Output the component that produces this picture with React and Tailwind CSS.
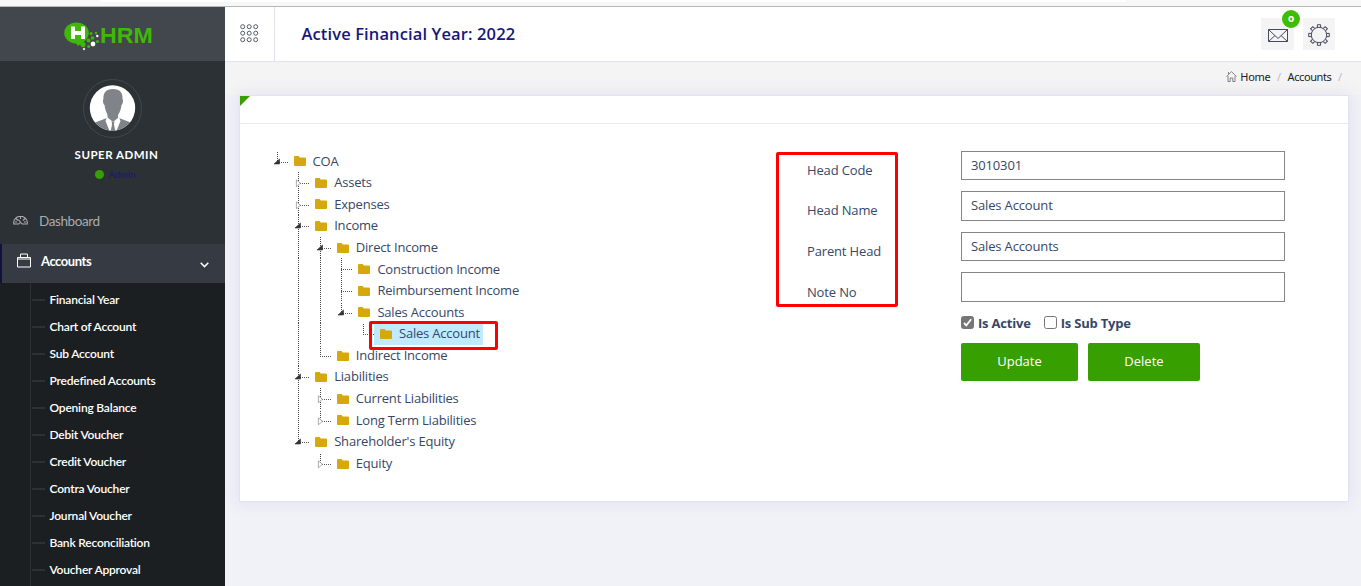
import React from "react";

const NAV = [
  "Financial Year",
  "Chart of Account",
  "Sub Account",
  "Predefined Accounts",
  "Opening Balance",
  "Debit Voucher",
  "Credit Voucher",
  "Contra Voucher",
  "Journal Voucher",
  "Bank Reconciliation",
  "Voucher Approval",
];

// guides: ancestor columns that carry a vertical line through the row
// state: open | closed | leaf; last: the branch ends on this row
const TREE = [
  { label: "COA", level: 0, guides: [], state: "open", last: true },
  { label: "Assets", level: 1, guides: [], state: "closed" },
  { label: "Expenses", level: 1, guides: [], state: "closed" },
  { label: "Income", level: 1, guides: [], state: "open" },
  { label: "Direct Income", level: 2, guides: [1], state: "open" },
  { label: "Construction Income", level: 3, guides: [1, 2], state: "leaf" },
  { label: "Reimbursement Income", level: 3, guides: [1, 2], state: "leaf" },
  { label: "Sales Accounts", level: 3, guides: [1, 2], state: "open", last: true },
  { label: "Sales Account", level: 4, guides: [1, 2], state: "leaf", last: true, selected: true },
  { label: "Indirect Income", level: 2, guides: [1], state: "leaf", last: true },
  { label: "Liabilities", level: 1, guides: [], state: "open" },
  { label: "Current Liabilities", level: 2, guides: [1], state: "closed" },
  { label: "Long Term Liabilities", level: 2, guides: [1], state: "closed", last: true },
  { label: "Shareholder's Equity", level: 1, guides: [], state: "open", last: true },
  { label: "Equity", level: 2, guides: [], state: "closed", last: true },
];

function Connector({ state, last }) {
  return (
    <svg className="h-[21.6px] w-6 shrink-0" viewBox="0 0 24 21.6">
      <path d={last ? "M7.2 1V11" : "M7.2 0V21.6"} stroke="#444" strokeDasharray="1 1" shapeRendering="crispEdges" />
      <path d="M7 11.5H19" stroke="#555" strokeDasharray="1 1" shapeRendering="crispEdges" />
      {state === "open" && <path d="M9.5 8v5H4z" fill="#333" stroke="#333" strokeWidth=".6" />}
      {state === "closed" && <path d="M5.4 7.8L9.4 11.3L5.4 14.8z" fill="#fff" stroke="#999" strokeWidth=".8" />}
    </svg>
  );
}

function Guide({ on }) {
  return (
    <svg className="h-[21.6px] w-[21.6px] shrink-0" viewBox="0 0 21.6 21.6">
      {on && <path d="M7.2 0V21.6" stroke="#444" strokeDasharray="1 1" shapeRendering="crispEdges" />}
    </svg>
  );
}

function TreeRow({ node }) {
  return (
    <div className="relative flex h-[21.6px] items-center">
      {Array.from({ length: node.level }, (_, i) => (
        <Guide key={i} on={node.guides.includes(i)} />
      ))}
      <Connector state={node.state} last={node.last} />
      <div className={node.selected ? "-ml-1.5 flex h-[21px] items-center bg-[#beebff] pr-[3px] pl-1.5" : "flex items-center"}>
        <svg className="mr-[7px] h-[10px] w-3" viewBox="0 0 12 10">
          <path d="M1 0H4.3Q5 0 5.3.8L5.6 1.5H11Q12 1.5 12 2.5V9Q12 10 11 10H1Q0 10 0 9V1Q0 0 1 0z" fill="#d5a90e" />
        </svg>
        <span className="whitespace-nowrap tracking-[-0.2px]">{node.label}</span>
      </div>
      {node.selected && (
        <div className="absolute top-[-2.3px] left-[99.4px] h-[29px] w-[129px] rounded-[2px] border-3 border-[#fe0000]" />
      )}
    </div>
  );
}

function Logo() {
  return (
    <div className="flex h-8 items-center">
      <svg className="h-8 w-9 shrink-0" viewBox="0 0 36 32">
        <ellipse cx="12.5" cy="12" rx="12.3" ry="10.5" fill="#3fb808" />
        <path d="M9 18L14 25L21 20z" fill="#3fb808" />
        <circle cx="19" cy="23.5" r="2.6" fill="#3fb808" />
        <circle cx="24.5" cy="19.5" r="2" fill="#3fb808" />
        <circle cx="27" cy="12.5" r="1.5" fill="#3fb808" />
        <circle cx="32" cy="12" r="1.2" fill="#3fb808" />
        <circle cx="28.5" cy="17" r="1.8" fill="#3fb808" />
        <circle cx="33.5" cy="20.5" r="1.6" fill="#3fb808" />
        <circle cx="24.7" cy="25.5" r="1.5" fill="#3fb808" />
        <circle cx="29" cy="23" r="2.4" fill="#fff" />
        <circle cx="33.3" cy="15" r="1.2" fill="#fff" />
        <circle cx="20" cy="28" r="1.2" fill="#ddd" />
        <path d="M9 5.5V18M19 5.5V18M9 12H19" stroke="#fff" strokeWidth="4" />
      </svg>
      <span className="mt-[-1.5px] origin-left scale-x-[1.08] font-['Liberation_Sans'] text-[21.5px] leading-none font-bold text-[#3fb808]">HRM</span>
    </div>
  );
}

function Avatar() {
  return (
    <svg className="h-[59px] w-[59px]" viewBox="0 0 59 59">
      <defs>
        <clipPath id="face"><circle cx="29.5" cy="29" r="22.7" /></clipPath>
      </defs>
      <circle cx="29.5" cy="29.5" r="29" fill="none" stroke="#42484c" />
      <circle cx="29.5" cy="29" r="22.7" fill="#fff" />
      <g clipPath="url(#face)">
        <path d="M30 10C23 10 20 14 20.5 20C19.5 21 20 25 21.5 26C22 31 24 34 24.5 36V40L30 47L35 40V36C37 33 38 30 38.5 26C40 25 40.5 21 39.5 20C40 14 37 10 30 10z" fill="#808388" />
        <path d="M24 39L5 46V54H54V46L36 39L32 52L30 43L28 52z" fill="#808388" />
        <path d="M24 38L22.5 42L27 53L30 42L33 53L37.5 42L36 38L30 43z" fill="#fff" />
        <path d="M28.5 42.5H31.5L31 45L32 52H28L29 45z" fill="#808388" />
      </g>
    </svg>
  );
}

function Sidebar() {
  return (
    <aside className="flex w-[225px] shrink-0 flex-col bg-[#2c3136] font-['Lato',sans-serif]">
      <div className="flex h-[54px] shrink-0 items-center bg-[#41474d] pt-1.5 pl-16"><Logo /></div>
      <div className="flex h-[183px] shrink-0 flex-col items-center pt-[18px]">
        <Avatar />
        <div className="mt-[7px] ml-2 text-[11.5px] leading-5 font-bold tracking-[0.5px] text-white">SUPER ADMIN</div>
        <div className="ml-1.5 flex items-center gap-1 text-[9.5px] leading-[19px] text-[#191970]">
          <span className="size-[9px] rounded-full bg-[#37a000]" />Admin
        </div>
        <div className="mt-[27px] flex h-[22px] w-full items-center pl-[13px] text-[13.5px] text-[#a9acae]">
          <svg className="mt-[-4px] mr-[11px] h-[9px] w-[15px]" viewBox="0 0 15 9" fill="none" stroke="#a9acae" strokeWidth="1.1">
            <path d="M.7 8V6.5A6.5 6 0 0 1 14.3 6.5V8H9.2A1.8 1.8 0 0 0 5.8 8zM3 2.5L5 4.5M7.5.7V3M12 2.5L10 4.5M2 6H4M11 6H13M5.2 3.5L7.6 6.2" />
          </svg>
          <span className="-mt-0.5 tracking-[-0.4px]">Dashboard</span>
        </div>
      </div>
      <div className="flex h-[39px] shrink-0 items-center border-l-2 border-[#11113f] bg-[#363a42] pr-4 pl-[15px] text-[13px] font-bold text-white">
        <svg className="mt-[-7px] mr-[10px] h-[15px] w-[14px]" viewBox="0 0 14 15" fill="none" stroke="#fff">
          <path d="M.5 4.5H13.5V14H.5zM3.5 4V1H10.5V4M1 6H13" />
        </svg>
        <span className="-mt-1 tracking-[-0.45px]">Accounts</span>
        <svg className="mt-0.5 ml-auto h-[6px] w-[9px]" viewBox="0 0 9 6" fill="none" stroke="#fff" strokeWidth="1.5"><path d="M.7.7L4.5 4.6L8.3.7" /></svg>
      </div>
      <div className="min-h-0 flex-1 bg-[#1c1f22] pl-[30px]">
        <ul className="h-full border-l border-[#2c3136] pt-[3px]">
          {NAV.map((label) => (
            <li key={label} className="flex h-[27px] items-center text-[12px] font-semibold text-white">
              <span className="mr-[4.5px] ml-px h-[2px] w-[13px] bg-[#2c3136]" />
              <span className="tracking-[-0.2px]">{label}</span>
            </li>
          ))}
        </ul>
      </div>
    </aside>
  );
}

function TopBar() {
  return (
    <header className="flex h-[55px] shrink-0 items-center border-b border-[#e1e4f0] bg-white">
      <div className="flex h-full w-[50px] items-center justify-center border-r border-[#e1e4f0]">
        <svg className="mb-0.5 h-[19px] w-[19px]" viewBox="0 0 19 19" fill="none" stroke="#565b66">
          {[2.7, 9.2, 15.7].map((y) => [2.7, 9.2, 15.7].map((x) => <circle key={x + "-" + y} cx={x} cy={y} r="2" />))}
        </svg>
      </div>
      <h1 className="ml-[26.5px] text-[16.5px] font-semibold tracking-[0.12px] text-[#17177c]">Active Financial Year: 2022</h1>
      <div className="mr-[26px] ml-auto flex gap-[9px]">
        <div className="relative flex h-8 w-[33px] items-center justify-center bg-[#f4f4f4]">
          <svg className="mt-0.5 h-[13px] w-5" viewBox="0 0 20 13" fill="none" stroke="#464a60">
            <path d="M.5.5H19.5V12.5H.5zM.5.5L10 9.5L19.5.5M.5 12.5L7 6.5M19.5 12.5L13 6.5" />
          </svg>
          <span className="absolute top-[-8px] right-[-6px] flex size-[18px] items-center justify-center rounded-full bg-[#3cbe04] pb-0.5 text-[10px] font-bold text-white">o</span>
        </div>
        <div className="flex size-8 items-center justify-center bg-[#f4f4f4]">
          <svg className="mt-0.5 size-[22px]" viewBox="0 0 22 22" fill="none" stroke="#464a60">
            <circle cx="11" cy="11" r="7.7" />
            {[0, 45, 90, 135, 180, 225, 270, 315].map((a) => (
              <path key={a} d="M9.4 3.3V.7H12.6V3.3" transform={`rotate(${a} 11 11)`} />
            ))}
          </svg>
        </div>
      </div>
    </header>
  );
}

function Breadcrumb() {
  return (
    <nav className="flex h-[33px] shrink-0 items-center justify-end bg-[#f4f4f4] pr-[19px] pb-[2px] font-['Noto_Sans',sans-serif] text-[11px] text-[#222]">
      <svg className="mr-[3px] mb-0.5 size-[11px]" viewBox="0 0 11 11" fill="none" stroke="#777" strokeWidth=".9">
        <path d="M.5 5.5L5.5.7L10.5 5.5M2 5V10.5H4.2V7H6.8V10.5H9V5M2.5 3V1" />
      </svg>
      <span className="tracking-[-0.3px]">Home</span>
      <span className="mx-[6.5px] text-[#bbb]">/</span>
      <span className="tracking-[-0.4px]">Accounts</span>
      <span className="ml-[6.5px] text-[#bbb]">/</span>
    </nav>
  );
}

function Check({ checked, label }) {
  return (
    <label className="flex items-center gap-1 font-bold tracking-[-0.2px]">
      <svg className="mb-[3px] size-[13px]" viewBox="0 0 13 13">
        <rect x=".5" y=".5" width="12" height="12" rx="2" fill={checked ? "#767676" : "#fff"} stroke="#767676" />
        {checked && <path d="M3 7L5.3 9.3L10.2 3.2" fill="none" stroke="#fff" strokeWidth="1.8" />}
      </svg>
      {label}
    </label>
  );
}

function HeadForm() {
  return (
    <div className="flex">
      <div className="relative flex w-[185px] flex-col pl-[31px] tracking-[-0.15px]">
        {["Head Code", "Head Name", "Parent Head", "Note No"].map((t) => (
          <div key={t} className="flex h-[40.7px] items-center">{t}</div>
        ))}
        <div className="absolute top-[2px] left-0 h-[155px] w-[122px] rounded-[2px] border-3 border-[#fe0000]" />
      </div>
      <div className="flex w-[324px] flex-col pt-[1px]">
        <div className="flex flex-col gap-[11px] tracking-[-0.15px]">
          {["3010301", "Sales Account", "Sales Accounts", ""].map((v, i) => (
            <div key={i} className="flex h-[29.4px] items-center border border-[#858585] px-[9px]">{v}</div>
          ))}
        </div>
        <div className="mt-[12px] flex h-5 items-center gap-[13px]">
          <Check checked label="Is Active" />
          <Check label="Is Sub Type" />
        </div>
        <div className="mt-[9px] flex gap-[10px] text-white">
          <button className="h-[38px] w-[117px] rounded-[2px] bg-[#37a000]">Update</button>
          <button className="h-[38px] w-[112px] rounded-[2px] bg-[#37a000]">Delete</button>
        </div>
      </div>
    </div>
  );
}

export default function App() {
  return (
    <div className="flex h-[586px] w-[1361px] flex-col overflow-hidden bg-[#f1f2f7] font-['Open_Sans',sans-serif] text-[13px] text-[#374767]">
      <div className="h-[7px] shrink-0 border-b border-[#b7b9b7] bg-[#f7f7f7] pl-[100px]">
        <div className="h-[2px] w-[1026px] rounded-b-sm bg-white" />
      </div>
      <div className="flex min-h-0 flex-1">
        <Sidebar />
        <main className="flex min-w-0 flex-1 flex-col">
          <TopBar />
          <Breadcrumb />
          <section className="mr-[12px] ml-[14px] h-[407px] border border-[#e1e4f0] bg-white shadow-[0_0_15px_1px_rgba(113,106,202,0.13)]">
            <div className="h-[28px] border-b border-[#e9eaef]">
              <svg className="size-[10px]" viewBox="0 0 10 10"><path d="M0 0H10L0 10z" fill="#37a000" /></svg>
            </div>
            <div className="flex pt-[26px] pl-[29.6px]">
              <div className="w-[506.4px] pt-[0.5px]">
                {TREE.map((n) => <TreeRow key={n.label} node={n} />)}
              </div>
              <HeadForm />
            </div>
          </section>
        </main>
      </div>
    </div>
  );
}
